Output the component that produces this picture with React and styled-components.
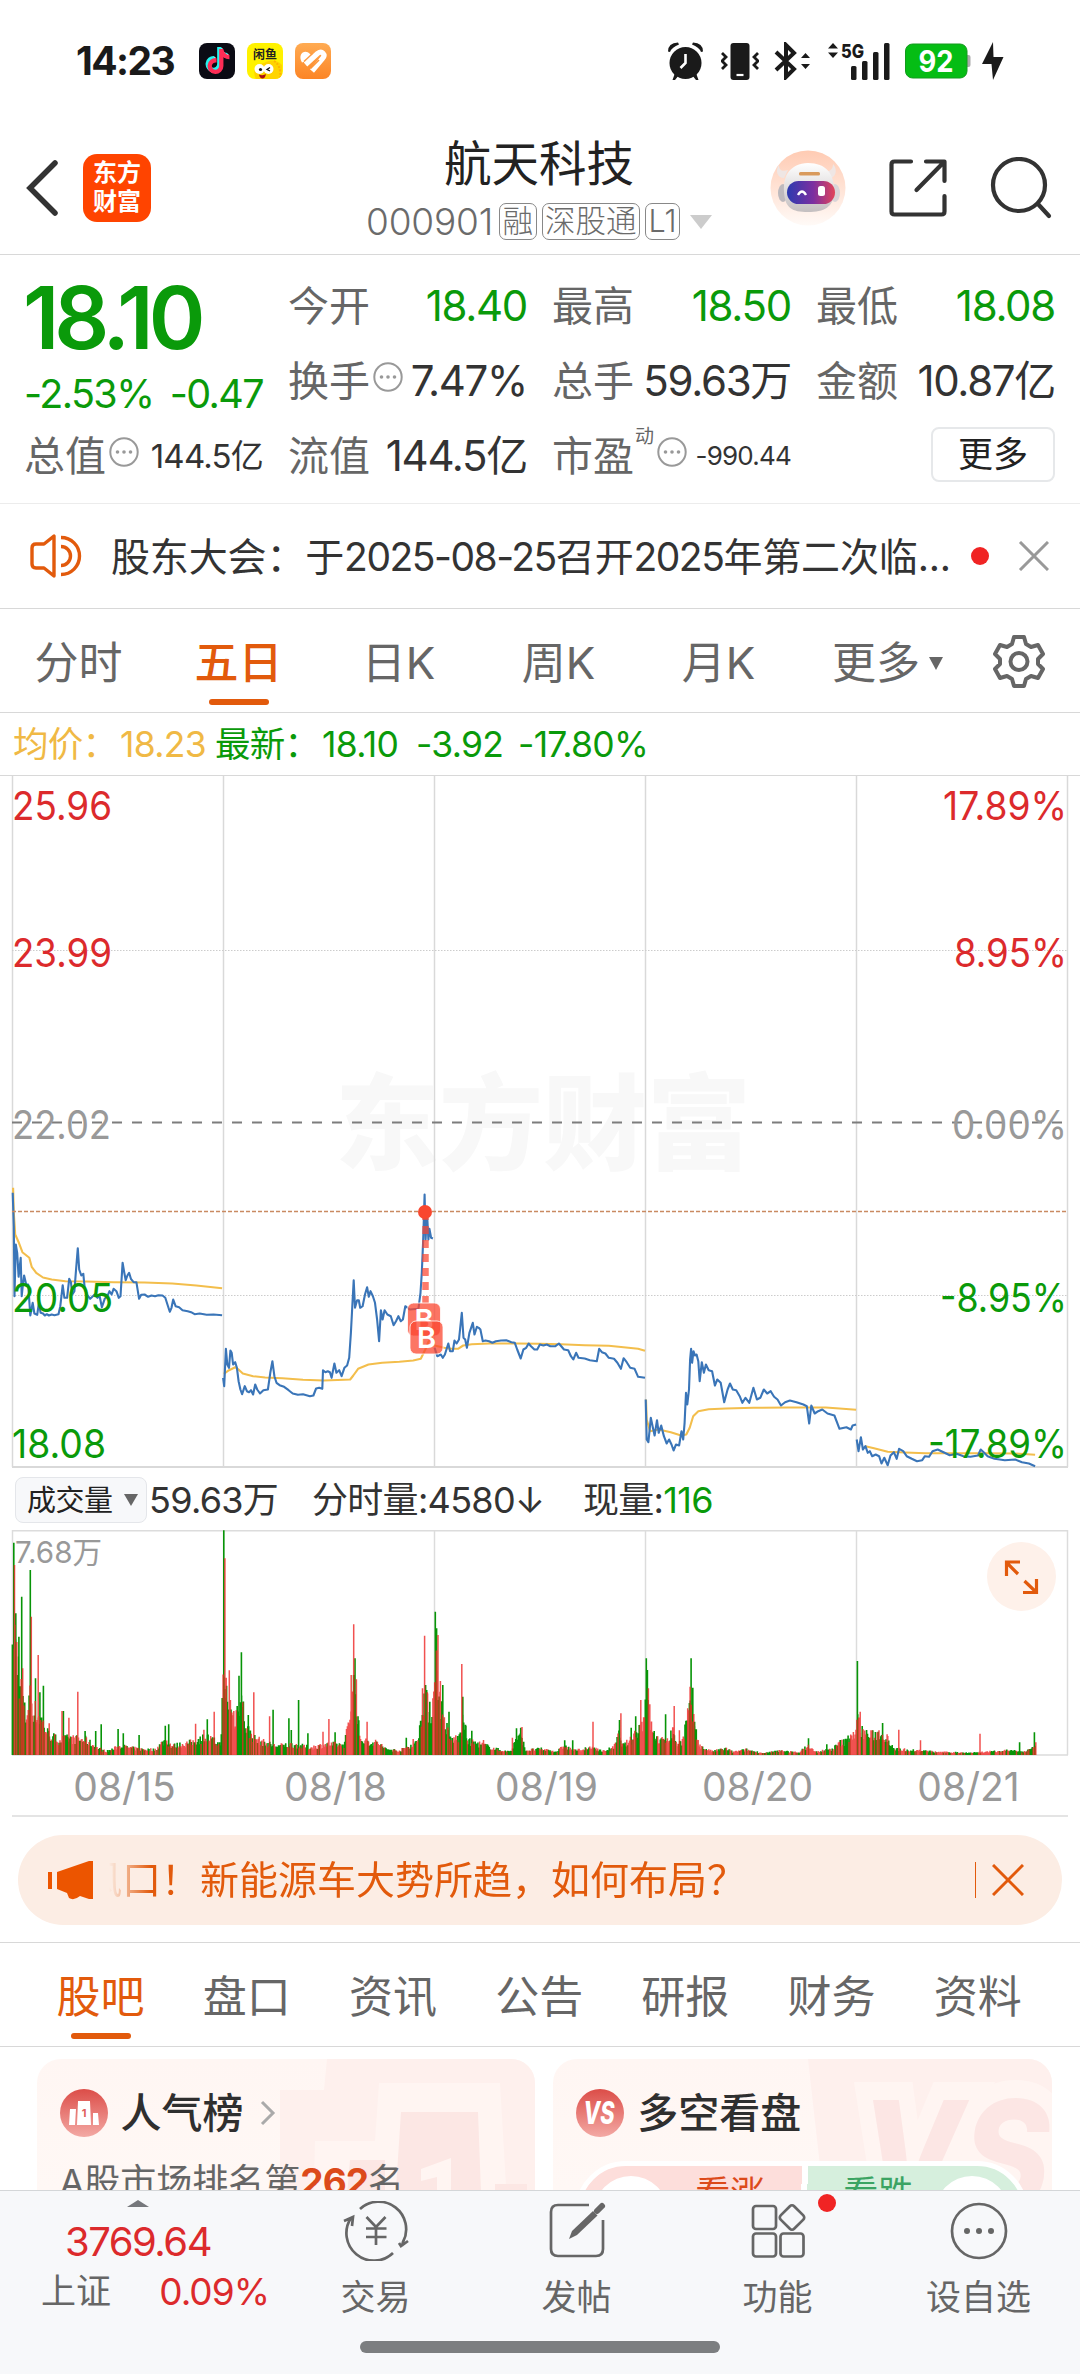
import React from "react";
import styled, { createGlobalStyle } from "styled-components";
import { FaTiktok } from "react-icons/fa";

const GREEN = "#0a9a0a";
const RED = "#dc2a2c";
const ORANGE = "#e25a0c";
const DARK = "#333";
const GRAY = "#666";

const GlobalStyle = createGlobalStyle`
  * {
    box-sizing: border-box;
  }
  body {
    margin: 0;
    background: #fff;
    font-family: Inter, "Noto Sans CJK SC", sans-serif;
    color: ${DARK};
  }
  svg {
    display: block;
    flex: none;
  }
`;

const Page = styled.div`
  width: 1080px;
  height: 2374px;
  overflow: hidden;
  display: flex;
  flex-direction: column;
  line-height: 1;
  white-space: nowrap;
`;

/* ---------- status bar ---------- */

const StatusBar = styled.div`
  height: 122px;
  padding: 0 76px 0 76px;
  display: flex;
  align-items: center;
  justify-content: space-between;
`;
const StatusGroup = styled.div`
  display: flex;
  align-items: center;
  gap: ${(p) => p.$gap}px;
`;
const Time = styled.span`
  width: 111px;
  font-size: 39px;
  font-weight: 700;
  letter-spacing: -1.600px;
  color: #1a1a1a;
`;
const AppIcon = styled.div`
  width: 36px;
  height: 36px;
  border-radius: 8px;
  overflow: hidden;
  background: ${(p) => p.$bg};
`;

const TikTok = styled.div`
  display: grid;
  padding: 5px 6px;

  svg {
    grid-area: 1 / 1;
  }
  svg:nth-child(1) {
    transform: translate(-1px, -1px);
  }
  svg:nth-child(2) {
    transform: translate(1px, 1px);
  }
`;

const AppIcons = () => (
  <>
    <AppIcon $bg="#0b0b14">
      <TikTok>
        <FaTiktok size={25} color="#25f4ee" />
        <FaTiktok size={25} color="#fe2c55" />
        <FaTiktok size={25} color="#fff" />
      </TikTok>
    </AppIcon>
    <AppIcon $bg="#fff200">
      <svg width="36" height="36" viewBox="0 0 36 36">
        <path d="M9 36c-4-8-1-15 8-16 5-3 12-4 18 2v14z" fill="#ffd400" />
        <path d="M27 18c5 3 7 9 6 18" fill="none" stroke="#ffb400" strokeWidth="2" strokeDasharray="2 1.5" />
        <text x="18" y="15.500" fontSize="12" fontWeight="700" textAnchor="middle" fill="#222">
          闲鱼
        </text>
        <circle cx="12.500" cy="26" r="5" fill="#fff" />
        <circle cx="21.500" cy="26" r="5" fill="#fff" />
        <circle cx="13.500" cy="26.500" r="1.600" fill="#111" />
        <path d="M23 24.500l-3 2 3 1.500" fill="none" stroke="#111" strokeWidth="1.300" />
        <path d="M12 31.500q4 1.500 7-.5-1 5-4 4.500-2.500-.5-3-4z" fill="#a11" />
      </svg>
    </AppIcon>
    <AppIcon $bg="linear-gradient(#ffab52, #fc8526)">
      <svg width="36" height="36" viewBox="0 0 36 36" fill="none" stroke="#fff" strokeWidth="5.200">
        <path d="M7 19.500C2 11 10 5.500 15 11l4.500 4" strokeWidth="0" fill="#fff" />
        <path d="M10.500 21.500L22.500 10.500c4.500-3.500 8.500 1 5 5L17 28" />
        <path d="M15.500 25.500L24 17" stroke="#fd9538" strokeWidth="1.600" />
        <path d="M9 18.500l8-7.500" stroke="#fd9a40" strokeWidth="1.400" />
      </svg>
    </AppIcon>
  </>
);

const Battery = styled.div`
  margin-right: -4.500px;
`;

const StatusIcons = () => (
  <>
    <svg width="38" height="38" viewBox="0 0 38 38" fill="#1a1a1a">
      <circle cx="18.500" cy="21" r="16" />
      <path d="M1 9.500Q1 1 11 .5L12 2.500Q5 5 3 10zM36 9.500Q36 1 26 .5L25 2.500Q32 5 34 10zM8 31l4 2-4 5H5.500zM29 31l-4 2 4 5h2.500z" />
      <path d="M18.500 12v9l-5 5" fill="none" stroke="#fff" strokeWidth="2.600" />
    </svg>
    <svg width="38" height="38" viewBox="0 0 38 38" fill="none" stroke="#1a1a1a" strokeWidth="2.800">
      <path d="M1 11l4 4-4 4 4 4-4 4M37 11l-4 4 4 4-4 4 4 4" />
      <rect x="9.500" y="1" width="19" height="37" rx="3" fill="#1a1a1a" stroke="none" />
      <path d="M15.500 33h7" stroke="#fff" strokeWidth="2.200" />
    </svg>
    <svg width="38" height="38" viewBox="0 0 38 38" fill="none" stroke="#1a1a1a" strokeWidth="4">
      <path d="M2 10l18 17-8 8V3l8 8L2 28" />
      <path d="M27 16l4.500-5 4.500 5zM27 22l4.500 5 4.500-5z" fill="#1a1a1a" stroke="none" />
    </svg>
    <svg width="62" height="38" viewBox="0 0 62 38" fill="#1a1a1a">
      <path d="M0 6.500L5 1l5 5.500zM0 10.500L5 16l5-5.500z" />
      <text x="13" y="15.500" fontSize="19" fontWeight="800" textLength="23" lengthAdjust="spacingAndGlyphs">
        5G
      </text>
      <rect x="23" y="24" width="5.500" height="14" rx="1.500" />
      <rect x="34" y="19" width="5.500" height="19" rx="1.500" />
      <rect x="45" y="10" width="5.500" height="28" rx="1.500" />
      <rect x="56" y="1" width="5.500" height="37" rx="1.500" />
    </svg>
    <Battery>
      <svg width="66" height="36" viewBox="0 0 66 36">
        <rect x="60" y="12" width="5.500" height="12" rx="2" fill="#aaa" />
        <rect x=".5" y="1" width="61.500" height="34" rx="7" fill="#05bd14" stroke="#149a1e" />
        <text x="31" y="28.500" fontSize="30" fontWeight="700" textAnchor="middle" fill="#fff" textLength="35" lengthAdjust="spacingAndGlyphs">
          92
        </text>
      </svg>
    </Battery>
    <svg width="22" height="40" viewBox="0 0 22 40" fill="#1a1a1a">
      <path d="M11 1L0 23h9.500L11 39l10.500-23h-10z" />
    </svg>
  </>
);

/* ---------- header ---------- */

const Header = styled.header`
  height: 133px;
  padding: 0 28px 0 26px;
  display: grid;
  grid-template-columns: 1fr auto 1fr;
  align-items: center;
  border-bottom: 1.500px solid #d8d8d8;
`;
const HeaderSide = styled.div`
  display: flex;
  align-items: center;
  justify-content: ${(p) => (p.$end ? "flex-end" : "flex-start")};
  gap: ${(p) => p.$gap}px;
`;
const Brand = styled.div`
  width: 68px;
  height: 68px;
  border-radius: 14px;
  background: #ff4400;
  color: #fff;
  font-size: 24px;
  font-weight: 700;
  line-height: 29px;
  text-align: center;
  white-space: normal;
  padding: 4px 9px;
`;
const TitleBlock = styled.div`
  display: flex;
  flex-direction: column;
  align-items: center;
  gap: 16px;
  padding-top: 4px;
`;
const StockName = styled.h1`
  margin: 0;
  font-size: 47.500px;
  font-weight: 400;
  color: #222;
`;
const CodeRow = styled.div`
  display: flex;
  align-items: center;
  gap: 5px;
  height: 37px;
  color: #6b6b6b;
`;
const Code = styled.span`
  font-size: 37px;
  font-weight: 300;
  letter-spacing: -0.200px;
  margin-right: 1px;
`;
const Tag = styled.span`
  height: 37px;
  line-height: 34px;
  padding: 0 2.500px;
  border: 1.500px solid #888;
  border-radius: 7px;
  font-size: 30.500px;
  font-weight: 300;
`;
const Caret = styled.span`
  width: 0;
  height: 0;
  border: ${(p) => p.$w / 2}px solid transparent;
  border-bottom: 0;
  border-top: ${(p) => p.$h}px solid ${(p) => p.$color};
  margin-left: ${(p) => p.$ml || 0}px;
`;

const Robot = () => (
  <svg width="76" height="76" viewBox="0 0 76 76">
    <defs>
      <linearGradient id="halo" x2="0" y2="1">
        <stop offset="0" stopColor="#ffcbb3" />
        <stop offset="1" stopColor="#fffaf7" />
      </linearGradient>
      <linearGradient id="visor">
        <stop offset="0" stopColor="#2c3bb0" />
        <stop offset=".55" stopColor="#7c2fa0" />
        <stop offset="1" stopColor="#e2455a" />
      </linearGradient>
      <linearGradient id="helmet" x2="0" y2="1">
        <stop offset="0" stopColor="#fff" />
        <stop offset="1" stopColor="#c4bfc0" />
      </linearGradient>
    </defs>
    <circle cx="38" cy="38" r="37.500" fill="url(#halo)" />
    <path d="M9 15c0 5 3 7 9 5l-4 8C7 28 5 20 9 15zM63 14c0 5-3 8-7 7l5 7c6-2 6-10 2-14z" fill="#efe6e4" />
    <ellipse cx="13" cy="43" rx="5" ry="9" fill="#bdb9bd" />
    <ellipse cx="65" cy="43" rx="5" ry="9" fill="#d9d5d8" />
    <path d="M14 42C13 25 20 14 38 13c18 0 27 11 26 29 0 15-10 20-26 20S15 58 14 42z" fill="url(#helmet)" />
    <rect x="29" y="22" width="21" height="3.500" rx="1.500" fill="#d99a5c" />
    <rect x="17" y="31" width="48" height="23" rx="11.500" fill="url(#visor)" />
    <path d="M28 45q4-7 8 0" fill="none" stroke="#fff" strokeWidth="2.400" />
    <rect x="48" y="36" width="7" height="10" rx="2.500" fill="#fff" />
  </svg>
);

/* ---------- quote ---------- */

const Quote = styled.section`
  height: 250px;
  padding: 14px 24px 9px 24px;
  display: grid;
  grid-template-columns: repeat(4, 239px);
  grid-template-rows: repeat(3, 75px);
  column-gap: 25px;
  border-bottom: 1.500px solid #ececec;
`;
const Cell = styled.div`
  display: flex;
  align-items: center;
  justify-content: space-between;
  height: 75px;
`;
const BigCell = styled.div`
  grid-row: span 2;
  display: flex;
  flex-direction: column;
  justify-content: space-between;
  padding: 6px 0 4px;
`;
const Price = styled.div`
  font-size: 86px;
  font-weight: 600;
  letter-spacing: -5px;
  color: ${GREEN};
  margin-left: -1px;
`;
const ChangeRow = styled.div`
  display: flex;
  justify-content: space-between;
  font-size: 39.500px;
  letter-spacing: -1.600px;
  color: ${GREEN};
`;
const Label = styled.span`
  display: flex;
  align-items: center;
  font-size: 41px;
  color: ${GRAY};

  sup {
    font-size: 19px;
    line-height: 1;
    align-self: flex-start;
    margin: -9px 0 0 1px;
  }
  svg {
    margin: -8px 0 0 3px;
  }
`;
const Value = styled.span`
  font-size: ${(p) => p.$size || 42}px;
  letter-spacing: ${(p) => (p.$size ? -0.8 : -1.3)}px;
  color: ${(p) => (p.$green ? GREEN : DARK)};
`;
const MoreButton = styled.button`
  width: 124px;
  height: 55px;
  margin: -4px 0 0 auto;
  border: 2px solid #e6e8ea;
  border-radius: 8px;
  background: #fff;
  font: 400 35px/1 Inter, "Noto Sans CJK SC", sans-serif;
  color: #222;
  padding: 0;
`;

const Dots = () => (
  <svg width="30" height="30" viewBox="0 0 30 30" fill="#999">
    <circle cx="15" cy="15" r="13.700" fill="none" stroke="#999" strokeWidth="2" />
    <circle cx="8.500" cy="15" r="1.800" />
    <circle cx="15" cy="15" r="1.800" />
    <circle cx="21.500" cy="15" r="1.800" />
  </svg>
);

/* ---------- notice ---------- */

const Notice = styled.section`
  height: 105px;
  padding: 0 28px 0 30px;
  display: flex;
  align-items: center;
  border-bottom: 1.500px solid #d8d8d8;
`;
const NoticeText = styled.span`
  width: 842px;
  margin: 0 18px 0 29px;
  font-size: 39px;
  letter-spacing: -0.150px;
`;
const Digits = styled.span`
  letter-spacing: -1.500px;
`;
const RedDot = styled.span`
  flex: none;
  width: 18px;
  height: 18px;
  border-radius: 50%;
  background: #f02424;
`;

/* ---------- tabs ---------- */

const Tabs = styled.nav`
  height: 104px;
  padding-left: ${(p) => p.$left || 0}px;
  display: flex;
  align-items: center;
  border-bottom: 1.500px solid #d8d8d8;

  > svg {
    margin-left: 14px;
  }
`;
const Tab = styled.div`
  width: ${(p) => p.$w}px;
  height: 100%;
  display: flex;
  flex-direction: column;
  align-items: center;
  padding-top: 32px;
  font-size: 44px;
  line-height: 44px;
  color: ${(p) => (p.$active ? ORANGE : GRAY)};

  &::after {
    content: "";
    width: 60px;
    height: 6px;
    margin-top: 14px;
    border-radius: 3px;
    background: ${(p) => (p.$active ? ORANGE : "transparent")};
  }
`;
const PeriodTab = styled(Tab)`
  padding-right: 3px;
  font-weight: ${(p) => (p.$active ? 500 : 400)};
`;
const TabLabel = styled.span`
  display: flex;
  align-items: center;
`;

/* ---------- chart ---------- */

const InfoLine = styled.div`
  height: 63px;
  padding: 2px 0 0 13px;
  display: flex;
  align-items: center;
  font-size: 35.500px;
  letter-spacing: -0.700px;
  color: ${GREEN};
  border-bottom: 1.500px solid #d8d8d8;
`;
const Seg = styled.span`
  width: ${(p) => p.$w}px;
  color: ${(p) => p.$color};
`;
const VolumeInfo = styled.div`
  height: 62px;
  padding: 2px 0 0 15px;
  display: flex;
  align-items: center;
  font-size: 36px;
  letter-spacing: -0.700px;
`;
const Picker = styled.div`
  width: 132px;
  height: 46px;
  margin-right: 2px;
  padding-left: 11px;
  display: flex;
  align-items: center;
  border: 1.500px solid #e4e6ea;
  border-radius: 8px;
  background: #f7f8fa;
  font-size: 29px;
  letter-spacing: -0.500px;
  color: #222;
`;
const Dates = styled.div`
  height: 61px;
  margin: 0 12px;
  padding: 2px 0 0 7px;
  display: grid;
  grid-template-columns: repeat(5, 211px);
  align-items: center;
  justify-items: center;
  font-size: 39px;
  color: #999;
  border-bottom: 2px solid #e4e4e4;
`;

const DAY_EDGES = [12.5, 223.5, 434.5, 645.5, 856.5, 1067.5];

// sample units -> pixels
const px = (x) => x / 2.904;
const R = 1568;
const line = (pts, from = 0) =>
  pts
    .trim()
    .split(/\s+/)
    .map((p, i) => {
      const [x, y] = p.split(",").map(Number);
      return `${i ? "L" : "M"}${px(x + from).toFixed(1)} ${(y / 3 + 263.5).toFixed(1)}`;
    })
    .join("");

const PRICE = [
  line(`37,460 40,560 42,770 46,615 50,640 54,712 60,655 63,770 67,730 70,708 76,735 82,735 88,828 95,790 100,822
    108,826 113,790 118,820 125,822 130,828 136,824 142,828 150,825 158,827 170,824 175,800 182,737 187,775
    195,775 201,718 206,728 210,765 216,755 220,700 226,626 230,690 236,708 242,703 246,745 252,765 262,778
    275,765 283,775 289,768 296,803 304,778 312,770 318,755 324,765 330,748 338,755 345,775 350,770 356,670
    361,700 365,722 370,708 375,700 380,718 388,728 396,728 404,778 410,766 420,765 430,772 440,768 450,770
    460,767 472,768 480,775 488,800 493,817 498,805 503,780 510,800 520,803 530,812 545,815 555,818 565,824
    580,822 600,826 620,825 645,827`),
  line(`648,1015 651,1040 656,928 660,975 665,985 669,933 673,940 677,975 683,968 688,985 693,1025 698,1050
    703,1064 711,1040 717,1055 723,1058 729,1052 735,1065 741,1035 747,1050 755,1062 765,1052 778,1050 785,1000
    791,965 797,1010 803,1030 812,1037 825,1042 838,1052 850,1062 865,1066 880,1064 900,1070 910,1068 918,1047
    927,1045 936,1048 938,992 945,998 952,995 958,998 963,1015 971,972 977,1000 985,992 992,1010 1000,985
    1008,978 1014,955 1019,880 1023,800 1027,722 1031,805 1037,782 1042,782 1046,805 1053,800 1060,765 1066,743
    1071,772 1076,755 1083,770 1089,790 1095,840 1101,905 1106,812 1111,840 1117,812 1125,825 1135,830 1143,857
    1150,845 1157,830 1164,845 1170,840 1177,800 1190,810 1215,808 1221,760 1225,700 1229,600 1233,465 1236,600
    1240,520 1244,600 1247,568 1252,595 1257,597`),
  line(`1262,925 1270,950 1280,945 1286,955 1292,945 1302,912 1307,935 1315,935 1320,903 1326,912 1333,900
    1341,820 1346,895 1351,900 1356,925 1363,880 1368,865 1373,850 1378,885 1385,862 1390,865 1395,870 1402,905
    1410,903 1420,905 1430,910 1440,905 1455,903 1470,902 1485,908 1495,910 1502,930 1512,957 1520,930 1528,925
    1535,912 1542,920 1552,930 1560,930 1568,915 1578,918 1588,915 1598,920 1613,920 1623,912 1638,930 1650,932
    1658,950 1665,960 1673,940 1680,955 1698,957 1713,962 1733,965 1740,928 1748,938 1758,942 1768,955 1783,958
    1793,970 1803,988 1811,956 1820,968 1830,985 1843,988 1853,1012 1873,1015`),
  line(
    `307,1080 310,1200 315,1208 322,1135 328,1165 333,1188 340,1142 345,1180 352,1158 360,1190 368,1212 375,1200
    382,1215 388,1233 395,1215 404,1218 411,1175 416,1200 420,1150 424,1060 428,1095 433,1050 436,960 439,928
    442,970 446,935 450,948 455,945 460,965 464,1025 470,968 476,1000 482,975 490,992 500,995 508,1038 515,1020
    525,1030 535,1088 545,1050 552,1032 560,1050 570,1052 580,1070 588,1090 597,1075 608,1090 620,1045 630,1080
    640,1075 650,1050 660,1062 670,1055 680,1072 690,1080 700,1098 712,1088 726,1083 745,1088 765,1095 775,1100
    782,1152 788,1098 798,1122 808,1115 820,1110 835,1122 855,1128 870,1168 890,1163 903,1170 908,1158 918,1155`,
    R
  ),
  line(
    `920,1200 925,1235 932,1193 938,1230 945,1220 952,1240 958,1235 965,1250 975,1245 985,1250 992,1272 1000,1255
    1010,1277 1018,1248 1028,1238 1036,1258 1043,1228 1055,1235 1065,1250 1080,1258 1095,1265 1110,1262 1118,1250
    1130,1252 1140,1235 1155,1230 1175,1240 1190,1247 1210,1243 1230,1250 1250,1252 1272,1248 1280,1230 1290,1240
    1300,1250 1320,1258 1350,1262 1380,1260 1400,1268 1420,1272 1438,1280`,
    R
  ),
];

const AVERAGE = [
  line(`38,445 40,520 44,585 55,610 65,638 85,655 92,682 105,700 125,714 150,720 190,725 250,726 330,728 420,729
    500,732 570,738 645,746`),
  line(`650,1003 665,992 683,983 695,992 705,1002 735,1010 770,1014 820,1016 880,1021 940,1023 1000,1021 1017,1020
    1026,1008 1040,988 1070,975 1110,970 1160,967 1200,963 1222,958 1235,930 1245,905 1257,895`),
  line(`1262,918 1290,925 1310,928 1330,928 1345,918 1370,914 1420,912 1500,912 1568,913 1628,914 1698,917
    1768,919 1818,924 1853,928 1873,934`),
  line(
    `308,1080 310,1140 320,1175 345,1170 380,1178 410,1188 425,1185 435,1165 445,1130 460,1115 490,1109 540,1107
    620,1105 720,1104 830,1104 870,1107 918,1111`,
    R
  ),
  line(`945,1220 970,1226 1010,1237 1060,1239 1120,1241 1200,1241 1300,1241 1380,1242 1438,1246`, R),
];

// x,height of the volume floor
const FLOOR = `36,300 45,400 60,230 75,120 85,200 100,150 120,120 140,70 170,50 200,55 250,50 280,25 310,12 350,30
  400,20 450,18 480,50 500,30 550,40 600,60 640,35 648,230 660,200 680,110 690,160 700,200 715,90 740,55 770,40
  800,30 850,35 900,25 950,35 1000,35 1015,120 1025,240 1035,170 1045,60 1060,45 1100,40 1120,20 1160,15 1210,40
  1220,100 1230,200 1240,170 1255,120 1262,350 1275,220 1285,130 1300,80 1310,50 1335,60 1345,110 1360,45 1400,35
  1440,20 1470,12 1485,15 1500,55 1516,60 1525,15 1568,20 1618,12 1638,30 1668,15 1728,25 1748,12 1783,25 1798,70
  1808,30 1833,50 1848,80 1868,110 1874,200 1886,120 1898,70 1918,45 1943,60 1956,80 1966,35 1983,50 1993,110
  2003,150 2013,120 2023,55 2038,25 2068,12 2108,22 2128,10 2168,18 2218,6 2268,15 2318,8 2348,30 2368,10 2418,20
  2438,40 2458,45 2468,70 2486,70 2488,120 2503,80 2528,65 2558,75 2578,55 2598,20 2628,18 2668,15 2718,10 2818,8
  2888,12 2928,16 2968,10 3008,25`
  .trim()
  .split(/\s+/)
  .map((p) => p.split(",").map(Number));

const SPIKES = `40,637,g 42,570,r 46,425,g 55,355,g 63,475,g 66,260,r 88,555,g 91,415,r 103,230,g 111,300,r
  116,188,g 126,208,g 143,95,r 180,132,r 184,132,g 200,112,r 226,190,r 247,72,g 278,72,g 294,92,g 343,78,g 358,65,g
  404,60,g 480,88,g 490,92,g 568,94,r 592,76,r 602,107,g 622,130,r 650,674,g 653,590,r 657,232,r 666,254,r 669,165,r
  679,132,r 694,238,g 701,308,g 705,158,r 721,120,g 737,188,r 783,116,r 793,136,g 839,110,g 846,75,g 867,165,g
  894,65,g 938,70,r 955,108,r 973,68,g 1020,240,r 1027,392,r 1031,290,g 1035,227,r 1066,100,r 1180,52,g 1200,48,r
  1227,200,r 1233,358,r 1236,210,g 1241,188,r 1248,160,g 1257,170,r 1264,430,g 1268,380,g 1272,360,r 1279,222,r
  1286,210,g 1304,130,g 1341,273,r 1344,175,g 1353,88,g 1370,73,g 1404,45,r 1488,52,r 1500,80,g 1512,82,g 1516,84,r
  1722,100,r 1640,44,g 1663,44,g 1799,105,g 1803,125,r 1833,82,g 1846,116,g 1861,165,r 1877,290,g 1880,255,g
  1883,200,r 1887,152,r 1933,122,g 1958,147,r 1973,74,r 1997,140,r 2004,205,r 2007,290,g 2012,202,g 2017,100,g
  2022,77,g 2348,50,g 2401,32,g 2490,282,g 2498,130,r 2563,96,g 2576,62,r 2610,76,r 2673,44,r 2846,64,r 2961,38,g
  3004,68,g 3008,38,r`
  .trim()
  .split(/\s+/)
  .map((p) => p.split(","));

const buildVolume = () => {
  let seed = 7;
  const rand = () => {
    seed = (seed * 16807) % 2147483647;
    return seed / 2147483647;
  };
  const paths = { r: "", g: "" };
  const add = (x, h, c) => {
    paths[c] += `M${px(x).toFixed(1)} 225v${(-h / 3).toFixed(1)}`;
  };
  let k = 0;
  let side = "g";
  for (let x = 36; x <= 3008; x += 2.56) {
    while (k < FLOOR.length - 2 && FLOOR[k + 1][0] < x) k++;
    const [x0, h0] = FLOOR[k];
    const [x1, h1] = FLOOR[k + 1];
    const base = h0 + ((h1 - h0) * (x - x0)) / (x1 - x0);
    if (rand() > 0.6) side = side === "g" ? "r" : "g";
    add(x, Math.max(6, base * (0.6 + rand() * 0.55)), side);
  }
  SPIKES.forEach(([x, h, c]) => add(+x, +h, c));
  return paths;
};

const VOLUME = buildVolume();

const AxisLabel = ({ y, color, end, len, children }) => (
  <text
    x={end ? 1067 : 12}
    y={y}
    fill={color}
    fontSize="39"
    textAnchor={end ? "end" : "start"}
    textLength={len}
    lengthAdjust="spacingAndGlyphs"
  >
    {children}
  </text>
);

const Buy = ({ x, y }) => (
  <g>
    <rect x={x} y={y} width="33" height="33" rx="6" fill="#fb4730" fillOpacity=".75" stroke="#fff" strokeOpacity=".8" />
    <text x={x + 16.5} y={y + 27} fontSize="29" fontWeight="600" fill="#fff" textAnchor="middle">
      B
    </text>
  </g>
);

const PriceChart = () => (
  <svg width="1080" height="692" viewBox="0 0 1080 692">
    <text x="543" y="386" fontSize="104" fontWeight="900" fill="#f8f8f8" textAnchor="middle">
      东方财富
    </text>
    <g stroke="#d9d9d9" strokeWidth="1.500">
      {DAY_EDGES.map((x) => (
        <path key={x} d={`M${x} 0V691`} />
      ))}
      <path d="M12 691H1068" strokeWidth="2" />
    </g>
    <path d="M12 174.500H1068M12 519.500H1068" stroke="#ccc" strokeDasharray="1.500 1.500" />
    <path d="M12 346.500H1068" stroke="#7d7d7d" strokeWidth="1.900" strokeDasharray="10 10" />
    <g fill="none" strokeWidth="2.100" strokeLinejoin="round">
      <g stroke="#f3be4c">
        {AVERAGE.map((d) => (
          <path key={d} d={d} />
        ))}
      </g>
      <g stroke="#3a75b8">
        {PRICE.map((d) => (
          <path key={d} d={d} />
        ))}
      </g>
    </g>
    <path d="M12 435.500H1068" stroke="#c98a62" strokeWidth="1.600" strokeDasharray="4 2" />
    <path d="M425.500 442V527" stroke="#fb4730" strokeOpacity=".72" strokeWidth="6.500" strokeDasharray="8 6" strokeDashoffset="6" />
    <circle cx="425" cy="436" r="7" fill="#f9472f" />
    <Buy x={407.5} y={527} />
    <Buy x={410} y={545} />
    <AxisLabel y={44} color={RED} len={100}>25.96</AxisLabel>
    <AxisLabel y={191} color={RED} len={100}>23.99</AxisLabel>
    <AxisLabel y={363} color="#999" len={99}>22.02</AxisLabel>
    <AxisLabel y={535.500} color={GREEN} len={101}>20.05</AxisLabel>
    <AxisLabel y={681.500} color={GREEN} len={94}>18.08</AxisLabel>
    <AxisLabel end y={44} color={RED} len={124}>17.89%</AxisLabel>
    <AxisLabel end y={191} color={RED} len={113}>8.95%</AxisLabel>
    <AxisLabel end y={363} color="#999" len={115}>0.00%</AxisLabel>
    <AxisLabel end y={535.500} color={GREEN} len={127}>-8.95%</AxisLabel>
    <AxisLabel end y={681.500} color={GREEN} len={139}>-17.89%</AxisLabel>
  </svg>
);

const VolumeChart = () => (
  <svg width="1080" height="226" viewBox="0 0 1080 226">
    <g stroke="#dcdcdc" strokeWidth="1.500">
      {DAY_EDGES.map((x) => (
        <path key={x} d={`M${x} 0V225`} />
      ))}
      <path d="M12 .7H1068M12 225H1068" />
    </g>
    <path d={VOLUME.g} stroke="#079407" strokeWidth="1.600" />
    <path d={VOLUME.r} stroke="#ee2624" strokeWidth="1.500" strokeOpacity=".8" />
    <text x="15" y="33" fontSize="30" fill="#999" textLength="87" lengthAdjust="spacingAndGlyphs">
      7.68万
    </text>
    <circle cx="1021.500" cy="46.500" r="34.500" fill="#fef1ea" />
    <path
      d="M1006.500 46V32H1020M1007 33L1018 44M1036.500 49V62.500H1023M1036 62L1024.500 51"
      fill="none"
      stroke={ORANGE}
      strokeWidth="3.200"
    />
  </svg>
);

/* ---------- banner ---------- */

const Banner = styled.section`
  width: 1044px;
  height: 90px;
  margin: 18px 18px 17px;
  padding: 0 38px 0 30px;
  display: flex;
  align-items: center;
  border-radius: 45px;
  background: #fcede4;
  color: ${ORANGE};
`;
const Marquee = styled.div`
  width: 840px;
  margin-left: 15px;
  overflow: hidden;
  font-size: 39px;
  line-height: 60px;
  text-indent: -26px;
  mask-image: linear-gradient(90deg, transparent, #000 42px);
`;
const Rule = styled.span`
  width: 1.500px;
  height: 36px;
  margin: 0 16px 0 auto;
  background: ${ORANGE};
`;
const Divider = styled.hr`
  width: 100%;
  height: 1.500px;
  margin: 0;
  border: 0;
  background: #d8d8d8;
`;

const Cross = ({ size, color, w }) => (
  <svg width={size} height={size} viewBox="0 0 32 32" stroke={color} strokeWidth={w}>
    <path d="M1 1L31 31M31 1L1 31" />
  </svg>
);

/* ---------- cards ---------- */

const Cards = styled.section`
  height: 143px;
  padding: 12px 28px 0 36.500px;
  display: flex;
  gap: 18px;
  overflow: hidden;
`;
const Card = styled.div`
  position: relative;
  width: 499px;
  height: 260px;
  padding: 30px 23px;
  border-radius: 24px;
  overflow: hidden;
  background: linear-gradient(#fff6f3, #fffaf7);
`;
const Backdrop = styled.svg`
  position: absolute;
  top: 0;
  right: 0;
`;
const CardTitle = styled.div`
  position: relative;
  display: flex;
  align-items: center;
  height: 48px;
  font-size: 41px;
  font-weight: 500;
  color: #2f2f2f;

  svg:first-child {
    margin-right: 13px;
  }
`;
const Rank = styled.div`
  position: relative;
  margin-top: 26px;
  font-size: 36px;
  color: ${GRAY};

  b {
    font-size: 37px;
    font-weight: 700;
    color: #dc4a1a;
    letter-spacing: -1px;
  }
`;
const Vote = styled.div`
  position: relative;
  width: 453px;
  height: 102px;
  margin: 24px 0 0 -1px;
  display: flex;
  border: 5px solid #fff;
  border-radius: 51px;
  overflow: hidden;
  background: linear-gradient(92deg, #fddedb 222px, #fff 222px, #fff 228px, #d6efdd 228px);
  font-size: 35px;
`;
const VoteSide = styled.div`
  flex: 1;
  display: flex;
  flex-direction: ${(p) => (p.$right ? "row-reverse" : "row")};
  gap: ${(p) => (p.$right ? 22 : 27)}px;
  padding: 10px 14px;
  color: ${(p) => (p.$right ? "#3ba463" : "#dc4a1a")};

  &::before {
    content: "";
    width: 74px;
    height: 74px;
    border-radius: 50%;
    background: #fff;
  }
`;

/* ---------- bottom bar ---------- */

const BottomBar = styled.footer`
  height: 184px;
  background: #f7f8fa;
  border-top: 1.500px solid #d4d6d8;
  display: flex;
  flex-direction: column;
`;
const BottomRow = styled.div`
  height: 150px;
  display: flex;
`;
const Index = styled.div`
  width: 275px;
  padding: 9px 6px 0 41px;
  display: flex;
  flex-direction: column;
  color: ${RED};

  > svg {
    margin-left: 86px;
  }
`;
const IndexValue = styled.div`
  margin: 15px 0 11px 24px;
  font-size: 40px;
  letter-spacing: -1.500px;
`;
const IndexRow = styled.div`
  display: flex;
  justify-content: space-between;
  align-items: center;
  font-size: 37px;
  letter-spacing: -1px;

  span {
    font-size: 35px;
    letter-spacing: 0;
    color: ${GRAY};
  }
`;
const Action = styled.div`
  position: relative;
  width: 201px;
  padding-top: 10px;
  display: flex;
  flex-direction: column;
  align-items: center;
  gap: 19px;
  font-size: 35px;
  color: ${GRAY};

  ${RedDot} {
    position: absolute;
    top: 3px;
    right: 42px;
  }
`;
const HomeIndicator = styled.div`
  width: 360px;
  height: 12px;
  margin: 0 auto;
  border-radius: 6px;
  background: #7c7e80;
`;

const ActionIcon = ({ children }) => (
  <svg width="66" height="60" viewBox="0 0 66 60" fill="none" stroke="#666" strokeWidth="2.700">
    {children}
  </svg>
);

const periods = ["分时", "五日", "日K", "周K", "月K"];
const sections = ["股吧", "盘口", "资讯", "公告", "研报", "财务", "资料"];

const App = () => {
  return (
    <Page>
      <GlobalStyle />
      <StatusBar>
        <StatusGroup $gap={12}>
          <Time>14:23</Time>
          <AppIcons />
        </StatusGroup>
        <StatusGroup $gap={15.5}>
          <StatusIcons />
        </StatusGroup>
      </StatusBar>

      <Header>
        <HeaderSide $gap={25}>
          <svg width="32" height="58" viewBox="0 0 32 58" fill="none" stroke="#333" strokeWidth="5.500" strokeLinecap="round">
            <path d="M29 4L4 29l25 25" />
          </svg>
          <Brand>东方财富</Brand>
        </HeaderSide>
        <TitleBlock>
          <StockName>航天科技</StockName>
          <CodeRow>
            <Code>000901</Code>
            <Tag>融</Tag>
            <Tag>深股通</Tag>
            <Tag>L1</Tag>
            <Caret $w={22} $h={14} $color="#ccc" $ml={5} />
          </CodeRow>
        </TitleBlock>
        <HeaderSide $end $gap={43}>
          <Robot />
          <svg width="58" height="58" viewBox="0 0 58 58" fill="none" stroke="#333" strokeWidth="4.200" strokeLinecap="round" strokeLinejoin="round">
            <path d="M22 2.500H5.500q-3 0-3 3v47q0 3 3 3h47q3 0 3-3V37M37 2.500h18.500V22M55 3L27.500 31" />
          </svg>
          <svg width="62" height="62" viewBox="0 0 62 62" fill="none" stroke="#333" strokeWidth="4.200" strokeLinecap="round">
            <circle cx="29" cy="28" r="26" />
            <path d="M48 47l11 12" />
          </svg>
        </HeaderSide>
      </Header>

      <Quote>
        <BigCell>
          <Price>18.10</Price>
          <ChangeRow>
            <span>-2.53%</span>
            <span>-0.47</span>
          </ChangeRow>
        </BigCell>
        <Cell>
          <Label>今开</Label>
          <Value $green>18.40</Value>
        </Cell>
        <Cell>
          <Label>最高</Label>
          <Value $green>18.50</Value>
        </Cell>
        <Cell>
          <Label>最低</Label>
          <Value $green>18.08</Value>
        </Cell>
        <Cell>
          <Label>
            换手
            <Dots />
          </Label>
          <Value>7.47%</Value>
        </Cell>
        <Cell>
          <Label>总手</Label>
          <Value>59.63万</Value>
        </Cell>
        <Cell>
          <Label>金额</Label>
          <Value>10.87亿</Value>
        </Cell>
        <Cell>
          <Label>
            总值
            <Dots />
          </Label>
          <Value $size={33}>144.5亿</Value>
        </Cell>
        <Cell>
          <Label>流值</Label>
          <Value>144.5亿</Value>
        </Cell>
        <Cell>
          <Label>
            市盈<sup>动</sup>
            <Dots />
          </Label>
          <Value $size={26}>-990.44</Value>
        </Cell>
        <Cell>
          <MoreButton>更多</MoreButton>
        </Cell>
      </Quote>

      <Notice>
        <svg width="52" height="46" viewBox="0 0 52 46" fill="none" stroke={ORANGE} strokeWidth="3.400" strokeLinejoin="round">
          <path d="M24 3v40L14 35H6q-4 0-4-4V15q0-4 4-4h8z" />
          <path d="M31 4.500a18.500 18.500 0 0 1 0 37M31 13.500a9.500 9.500 0 0 1 0 19" />
        </svg>
        <NoticeText>
          股东大会：于<Digits>2025-08-25</Digits>召开<Digits>2025</Digits>年第二次临...
        </NoticeText>
        <RedDot />
        <svg width="60" height="30" viewBox="-30 0 60 30" stroke="#999" strokeWidth="3">
          <path d="M1 1l28 28M29 1L1 29" />
        </svg>
      </Notice>

      <Tabs>
        {periods.map((name, i) => (
          <PeriodTab key={name} $w={160} $active={i === 1}>
            {name}
          </PeriodTab>
        ))}
        <PeriodTab $w={178}>
          <TabLabel>
            更多
            <Caret $w={14} $h={13} $color={GRAY} $ml={9} />
          </TabLabel>
        </PeriodTab>
        <svg width="54" height="54" viewBox="0 0 54 54" fill="none" stroke={GRAY} strokeWidth="4" strokeLinejoin="round">
          <path d="M22 3h10l2 7 5 3 7-2 5 9-5 5v5l5 5-5 9-7-2-5 3-2 7H22l-2-7-5-3-7 2-5-9 5-5v-5l-5-5 5-9 7 2 5-3z" />
          <circle cx="27" cy="27.500" r="8.500" />
        </svg>
      </Tabs>

      <InfoLine>
        <Seg $w={107} $color="#f0b945">均价：</Seg>
        <Seg $w={95} $color="#f0b945">18.23</Seg>
        <Seg $w={107}>最新：</Seg>
        <Seg $w={94}>18.10</Seg>
        <Seg $w={102}>-3.92</Seg>
        <Seg>-17.80%</Seg>
      </InfoLine>
      <PriceChart />
      <VolumeInfo>
        <Picker>
          成交量
          <Caret $w={15} $h={12} $color="#666" $ml={11} />
        </Picker>
        <Seg $w={163}>59.63万</Seg>
        <Seg $w={271}>分时量:4580↓</Seg>
        <Seg>现量:</Seg>
        <Seg $color={GREEN}>116</Seg>
      </VolumeInfo>
      <VolumeChart />
      <Dates>
        <span>08/15</span>
        <span>08/18</span>
        <span>08/19</span>
        <span>08/20</span>
        <span>08/21</span>
      </Dates>

      <Banner>
        <svg width="46" height="42" viewBox="0 0 46 42" fill="#ec5500">
          <path d="M0 13h4v17H0zM9 13L41 2h4v38h-4l-9-3q-6 5-11 2l-2-5-10-4z" />
        </svg>
        <Marquee>风口！新能源车大势所趋，如何布局？</Marquee>
        <Rule />
        <Cross size={32} color={ORANGE} w={3} />
      </Banner>
      <Divider />

      <Tabs $left={27.5}>
        {sections.map((name, i) => (
          <Tab key={name} $w={146.2} $active={i === 0}>
            {name}
          </Tab>
        ))}
      </Tabs>

      <Cards>
        <Card>
          <Backdrop width="260" height="160" viewBox="0 0 260 160">
            <path d="M5 31h44L52 0h208v160H5z" fill="#fef0ed" />
            <path d="M40 82h60l4-58h121l8 136H38z" fill="#fff5f2" />
            <path d="M126 53h77l4 107h-88zM75 101h35v59H70z" fill="#fce7e4" />
            <path d="M146 110l30-11v61h-14v-42l-16 4z" fill="#fff5f2" />
            <path d="M220 125h32v35h-32z" fill="#fce7e4" />
          </Backdrop>
          <CardTitle>
            <svg width="48" height="48" viewBox="0 0 48 48">
              <defs>
                <linearGradient id="badge" x2="0" y2="1">
                  <stop offset="0" stopColor="#dc4d48" />
                  <stop offset="1" stopColor="#f3a9a4" />
                </linearGradient>
              </defs>
              <circle cx="24" cy="24" r="24" fill="url(#badge)" />
              <path d="M18 12h12l1 24H17zM10 20h6l-1 16H9zM33 24h5l1 12h-6z" fill="#fff" />
              <text x="24" y="27.500" fontSize="11" fontWeight="700" textAnchor="middle" fill="#e0605b">
                1
              </text>
            </svg>
            人气榜
            <svg width="46" height="28" viewBox="-17 0 46 28" fill="none" stroke="#aaa" strokeWidth="3">
              <path d="M1 3l11 11L1 25" />
            </svg>
          </CardTitle>
          <Rank>
            A股市场排名第<b>262</b>名
          </Rank>
        </Card>
        <Card>
          <Backdrop width="260" height="160" viewBox="0 0 260 160">
            <path d="M16 0h244v160H34z" fill="#fef0ed" />
            <text x="68" y="150" fontSize="150" fontWeight="800" fontStyle="italic" fill="#fce6e4" stroke="#fff5f2" strokeWidth="36" paintOrder="stroke" textLength="190" lengthAdjust="spacingAndGlyphs">
              VS
            </text>
          </Backdrop>
          <CardTitle>
            <svg width="48" height="48" viewBox="0 0 48 48">
              <circle cx="24" cy="24" r="24" fill="url(#badge)" />
              <text x="23" y="35" fontSize="31" fontWeight="800" fontStyle="italic" textAnchor="middle" fill="#fff" textLength="31" lengthAdjust="spacingAndGlyphs">
                VS
              </text>
            </svg>
            多空看盘
          </CardTitle>
          <Vote>
            <VoteSide>看涨</VoteSide>
            <VoteSide $right>看跌</VoteSide>
          </Vote>
        </Card>
      </Cards>

      <BottomBar>
        <BottomRow>
          <Index>
            <svg width="22" height="7" viewBox="0 0 22 7">
              <path d="M0 7L11 0l11 7z" fill="#76787c" />
            </svg>
            <IndexValue>3769.64</IndexValue>
            <IndexRow>
              <span>上证</span>
              0.09%
            </IndexRow>
          </Index>
          <Action>
            <ActionIcon>
              <path d="M17 8A27.500 27.500 0 0 1 60 41l-1 4M56 42l2 3 7-5M50 52A27.500 27.500 0 0 1 8 17M1 20l9-4-1 9" />
              <path d="M23.500 16L33 26l9.500-10M33 26v18M23 27.500h20.500M23 36h20.500" />
            </ActionIcon>
            交易
          </Action>
          <Action>
            <ActionIcon>
              <path d="M45 4H14q-7 0-7 7v37q0 7 7 7h38q7 0 7-7V19" />
              <path d="M25 38l3-8 21-20 4.500 4.500L33 34z" fill="#666" stroke="none" />
              <path d="M53 10l5-5" strokeWidth="6" strokeLinecap="round" />
            </ActionIcon>
            发帖
          </Action>
          <Action>
            <ActionIcon>
              <rect x="8" y="5" width="23" height="23" rx="3" />
              <rect x="8" y="32.500" width="23" height="23" rx="3" />
              <rect x="35.500" y="32.500" width="23" height="23" rx="3" />
              <rect x="37.500" y="7" width="19" height="19" rx="3" transform="rotate(45 47 16.500)" />
            </ActionIcon>
            功能
            <RedDot />
          </Action>
          <Action>
            <ActionIcon>
              <circle cx="33" cy="30" r="27" />
              <g fill="#666" stroke="none">
                <circle cx="21" cy="30" r="3" />
                <circle cx="33" cy="30" r="3" />
                <circle cx="45" cy="30" r="3" />
              </g>
            </ActionIcon>
            设自选
          </Action>
        </BottomRow>
        <HomeIndicator />
      </BottomBar>
    </Page>
  );
};

export default App;
